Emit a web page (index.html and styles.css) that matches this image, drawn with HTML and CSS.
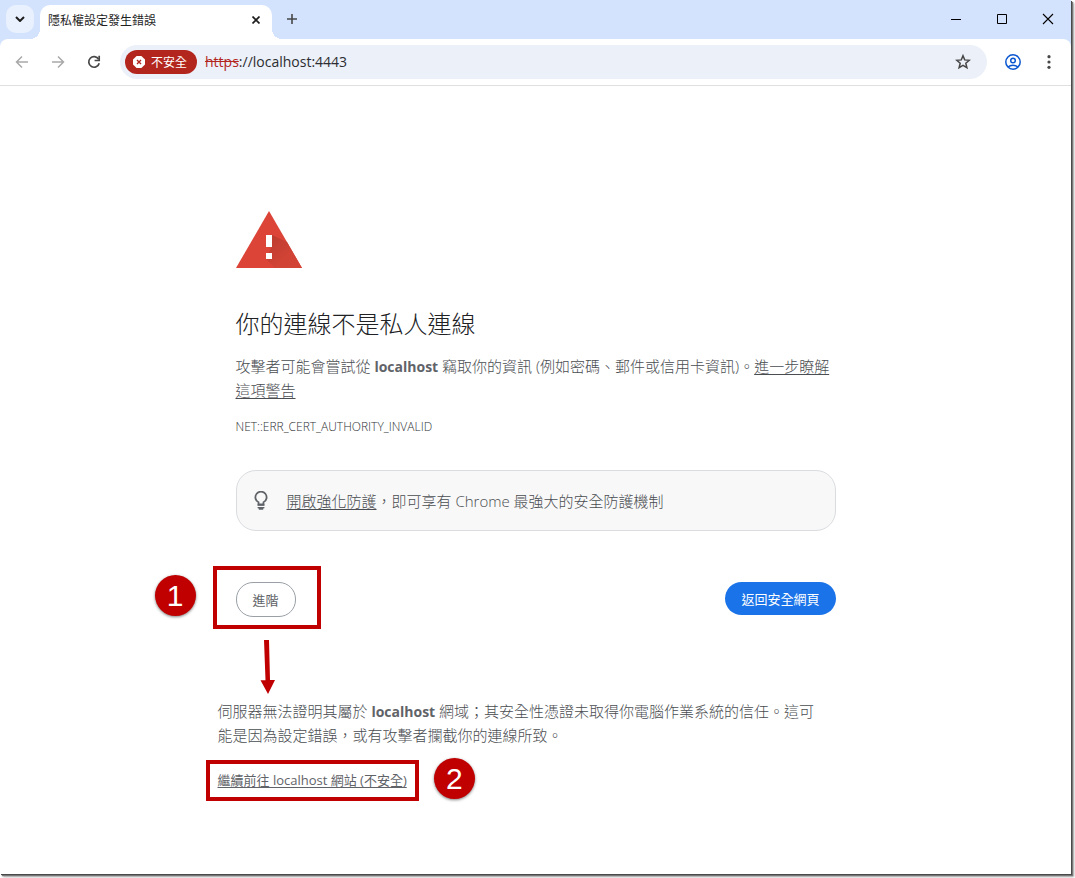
FILE: index.html
```html
<!DOCTYPE html>
<html lang="zh-Hant">
<head>
<meta charset="utf-8">
<meta name="viewport" content="width=device-width, initial-scale=1">
<title>隱私權設定發生錯誤</title>
<link rel="stylesheet" href="styles.css">
</head>
<body>
<div class="window">
  <header class="tabstrip">
    <button class="tab-search" type="button" aria-label="搜尋分頁">
      <svg width="10" height="6" viewBox="0 0 10 6"><path d="M1 1l4 4 4-4" fill="none" stroke="#1f1f1f" stroke-width="2"/></svg>
    </button>
    <div class="tab">
      <span class="tab-title">隱私權設定發生錯誤</span>
      <button class="plain tab-close" type="button" aria-label="關閉分頁">
        <svg width="8" height="8" viewBox="0 0 8 8"><path d="M.5.5l7 7M7.500.5l-7 7" stroke="#1f1f1f" stroke-width="1.700"/></svg>
      </button>
    </div>
    <button class="plain new-tab" type="button" aria-label="新分頁">
      <svg width="10" height="10" viewBox="0 0 10 10"><path d="M5 0v10M0 5h10" stroke="#474747" stroke-width="1.600"/></svg>
    </button>
    <div class="window-controls">
      <button class="plain" type="button" aria-label="最小化"><svg width="12" height="12" viewBox="0 0 12 12"><path d="M1 6.500h10" stroke="#000"/></svg></button>
      <button class="plain" type="button" aria-label="最大化"><svg width="12" height="12" viewBox="0 0 12 12"><path d="M1.500 1.500h9v9h-9z" fill="none" stroke="#000"/></svg></button>
      <button class="plain" type="button" aria-label="關閉"><svg width="12" height="12" viewBox="0 0 12 12"><path d="M1 1l10 10M11 1L1 11" stroke="#000" stroke-width="1.100"/></svg></button>
    </div>
  </header>

  <nav class="toolbar">
    <button class="plain tool" type="button" aria-label="上一頁" disabled><svg width="14" height="14" viewBox="0 0 14 14"><path d="M13 7H2M7 1.500L1.500 7 7 12.500" fill="none" stroke="#a9a9a9" stroke-width="1.500"/></svg></button>
    <button class="plain tool" type="button" aria-label="下一頁" disabled><svg width="14" height="14" viewBox="0 0 14 14"><path d="M1 7h11M7 1.500L12.500 7 7 12.500" fill="none" stroke="#a9a9a9" stroke-width="1.500"/></svg></button>
    <button class="plain tool" type="button" aria-label="重新載入"><svg width="14" height="14" viewBox="0 0 14 14"><path d="M11.600 4.200A5.300 5.300 0 1 0 12.200 8.200" fill="none" stroke="#474747" stroke-width="1.700"/><path d="M12.200.8v4.700H7.600" fill="none" stroke="#474747" stroke-width="1.700"/></svg></button>
    <div class="omnibox">
      <button class="security" type="button">
        <svg width="12" height="12" viewBox="0 0 12 12"><path d="M3.600 0h4.800L12 3.600v4.800L8.400 12H3.600L0 8.400V3.600z" fill="#fff" stroke-linejoin="round"/><path d="M4 4l4 4M8 4L4 8" stroke="#b3261e" stroke-width="1.400"/></svg>
        不安全
      </button>
      <label class="scheme" for="url">https</label>
      <input class="url" id="url" type="text" value="://localhost:4443">
      <button class="plain star" type="button" aria-label="加入書籤"><svg width="16" height="16" viewBox="0 0 16 16"><path d="M8 1.700l1.700 4.200 4.600.4-3.500 3 1.100 4.400L8 11.300l-3.900 2.400 1.100-4.400-3.500-3 4.600-.4z" fill="none" stroke="#474747" stroke-width="1.500"/></svg></button>
    </div>
    <button class="plain tool profile" type="button" aria-label="個人資料"><svg width="16" height="16" viewBox="0 0 16 16"><g fill="none" stroke="#0b57d0" stroke-width="1.500"><circle cx="8" cy="8" r="7.200"/><circle cx="8" cy="6.500" r="2.300"/><path d="M3 13c2.600-2.500 7.400-2.500 10 0"/></g></svg></button>
    <button class="plain tool" type="button" aria-label="選單"><svg width="4" height="14" viewBox="0 0 4 14" fill="#474747"><circle cx="2" cy="1.700" r="1.600"/><circle cx="2" cy="7" r="1.600"/><circle cx="2" cy="12.300" r="1.600"/></svg></button>
  </nav>

  <main class="page">
    <svg class="warning" width="66" height="57" viewBox="0 0 66 57" aria-hidden="true">
      <defs><linearGradient id="shade" x1="0" y1="0" x2="1" y2="1"><stop offset="0" stop-color="#b93a2e"/><stop offset=".6" stop-color="#d04335"/><stop offset="1" stop-color="#d34436"/></linearGradient></defs>
      <path d="M33 0l33 57H0z" fill="#db4437"/>
      <path d="M36 24l15 7 15 26H39l-9-9 6-13z" fill="url(#shade)"/>
      <path d="M30 24h6v12h-6zM30 42h6v6h-6z" fill="#fff"/>
    </svg>
    <h1 class="title">你的連線不是私人連線</h1>
    <p class="message">攻擊者可能會嘗試從 <strong>localhost</strong> 竊取你的資訊 (例如密碼、郵件或信用卡資訊)。<a href="#learn">進一步瞭解這項警告</a></p>
    <p class="code">NET::ERR_CERT_AUTHORITY_INVALID</p>
    <div class="promo">
      <svg width="14" height="20" viewBox="0 0 14 20"><path d="M4.500 13.500v-2.200A5.600 5.600 0 1 1 9.500 11.300v2.200z" fill="none" stroke="#5f6368" stroke-width="1.800"/><path d="M3.600 13.300h6.800v1.500H3.600zM3.600 16h6.800v1.300l-1.200.2v1.200H4.800v-1.200l-1.200-.2z" fill="#5f6368"/></svg>
      <p class="promo-text"><a href="#enhanced">開啟強化防護</a>，即可享有 Chrome 最強大的安全防護機制</p>
    </div>
    <div class="actions">
      <div class="step">
        <button class="pill details-button" type="button">進階</button>
        <span class="badge badge-one">1</span>
        <svg class="arrow" width="16" height="55" viewBox="0 0 16 55" aria-hidden="true"><path d="M4 0h5l1 40h5L8 54 .5 40.300h5z" fill="#c00000"/></svg>
      </div>
      <button class="pill primary" type="button">返回安全網頁</button>
    </div>
    <section class="details">
      <p class="message">伺服器無法證明其屬於 <strong>localhost</strong> 網域；其安全性憑證未取得你電腦作業系統的信任。這可能是因為設定錯誤，或有攻擊者攔截你的連線所致。</p>
      <p class="proceed"><a href="#proceed">繼續前往 localhost 網站 (不安全)</a><span class="badge badge-two">2</span></p>
    </section>
  </main>
</div>
</body>
</html>
```
FILE: styles.css
```css
* { box-sizing: border-box; }

body {
  margin: 0;
  padding: 0 4px 4px 0;
  background: #fff;
  color: #4a4d51;
  font-family: "Open Sans", "Noto Sans CJK TC", sans-serif;
  font-size: 15px;
}

.window {
  display: flex;
  flex-direction: column;
  min-height: calc(100vh - 4px);
  background: #fff;
  box-shadow: 1px 1px 0 #4a4a4a, 2px 2px 1px #777, 3px 3px 2px #aaa;
}

button, input { font: inherit; }
button { display: inline-flex; align-items: center; justify-content: center; padding: 0; }
svg { display: block; flex: none; }
a { color: inherit; text-underline-offset: 2px; }
strong { color: #5f6368; font-size: 14px; font-weight: 700; line-height: 1; }

.plain { border: 0; background: none; }

/* Tab strip */
.tabstrip {
  display: flex;
  height: 47px;
  margin-bottom: -8px;
  padding: 5px 0 8px 6px;
  background: #d3e3fd;
}

.tab-search {
  width: 28px;
  height: 28px;
  border: 0;
  border-radius: 10px;
  background: #e9f1fe;
}

.tab {
  position: relative;
  display: flex;
  align-items: center;
  justify-content: space-between;
  width: 232px;
  margin-left: 6px;
  padding: 0 8px 5px;
  border-radius: 10px 10px 0 0;
  background: #fff;
  color: #1f1f1f;
  font-size: 12px;
}

.tab::before, .tab::after {
  content: "";
  position: absolute;
  bottom: 0;
  width: 10px;
  height: 10px;
}
.tab::before { right: 100%; background: radial-gradient(circle at 0 0, transparent 10px, #fff 10px); }
.tab::after { left: 100%; background: radial-gradient(circle at 100% 0, transparent 10px, #fff 10px); }

.tab-close { width: 16px; height: 16px; }
.new-tab { width: 28px; height: 28px; margin-left: 6px; }
.window-controls { display: flex; margin-left: auto; height: 28px; }
.window-controls button { width: 46px; }

/* Toolbar */
.toolbar {
  display: flex;
  align-items: center;
  position: relative;
  height: 47px;
  padding: 0 4px;
  border-bottom: 1px solid #dedfe1;
  border-radius: 8px 8px 0 0;
  background: #fff;
}

.tool { width: 36px; height: 34px; }
.profile { margin-left: 8px; }

.omnibox {
  display: flex;
  flex: 1;
  align-items: center;
  height: 34px;
  margin-left: 8px;
  padding: 0 12px 0 5px;
  border-radius: 17px;
  background: #ecf0f9;
  color: #3c4043;
}

.security {
  gap: 6px;
  height: 24px;
  padding: 0 10px 0 8px;
  border: 0;
  border-radius: 12px;
  background: #b3261e;
  color: #fff;
  font-size: 12px;
}

.scheme { margin-left: 8px; padding-bottom: 2px; color: #b3261e; font-size: 14px; text-decoration: line-through; }

.url {
  flex: 1;
  min-width: 0;
  padding: 0 0 2px;
  border: 0;
  outline: 0;
  background: none;
  color: #2b2d30;
  font-size: 14px;
}

.star { width: 24px; height: 24px; }

/* Warning page */
.page {
  width: 100%;
  max-width: 600px;
  margin: 0 auto;
  padding: 125px 0 64px;
  font-weight: 300;
}

.title { margin: 38px 0 0; color: #202124; font-size: 24px; font-weight: 300; line-height: 36px; }
.message { margin: 12px 0 0; line-height: 24px; }
.code { margin: 16px 0 0; color: #303236; font-size: 12px; line-height: 18px; }

.promo {
  display: flex;
  align-items: center;
  gap: 19px;
  min-height: 61px;
  margin-top: 34px;
  padding: 0 17px;
  border: 1px solid #dadce0;
  border-radius: 20px;
  background: #f8f8f8;
}
.promo-text { margin: 0; line-height: 24px; }

.actions {
  display: flex;
  align-items: flex-start;
  justify-content: space-between;
  margin-top: 51px;
}

.pill { height: 33px; padding: 0 16px; border: 0; border-radius: 17px; font-size: 13px; font-weight: 400; }
.primary { background: #1a73e8; color: #fff; }
.details-button { height: 35px; border: 1px solid #9aa0a6; background: #fff; color: #5f6368; }

.step { position: relative; }
.step::before {
  content: "";
  position: absolute;
  inset: -16px -25px -12px -23px;
  border: 4px solid #c00000;
}

.badge {
  position: absolute;
  width: 41px;
  height: 41px;
  border-radius: 50%;
  background: #c00000;
  box-shadow: 0 1px 3px rgba(0, 0, 0, .5);
  color: #fff;
  font-family: "Liberation Sans", sans-serif;
  font-size: 30px;
  line-height: 41px;
  text-align: center;
}
.badge-one { top: -7px; left: -81px; }
.badge-two { top: -6px; left: calc(100% + 19px); }
.arrow { position: absolute; top: 58px; left: 24px; }

.details { margin: 82px 18px 0 -18px; }
.details .message { margin: 0; }

.proceed {
  position: relative;
  width: fit-content;
  margin: 13px 0 0 -12px;
  padding: 6px 8px;
  border: 4px solid #c00000;
  color: #5f6368;
  font-size: 13px;
  font-weight: 400;
  line-height: 21px;
}
```
